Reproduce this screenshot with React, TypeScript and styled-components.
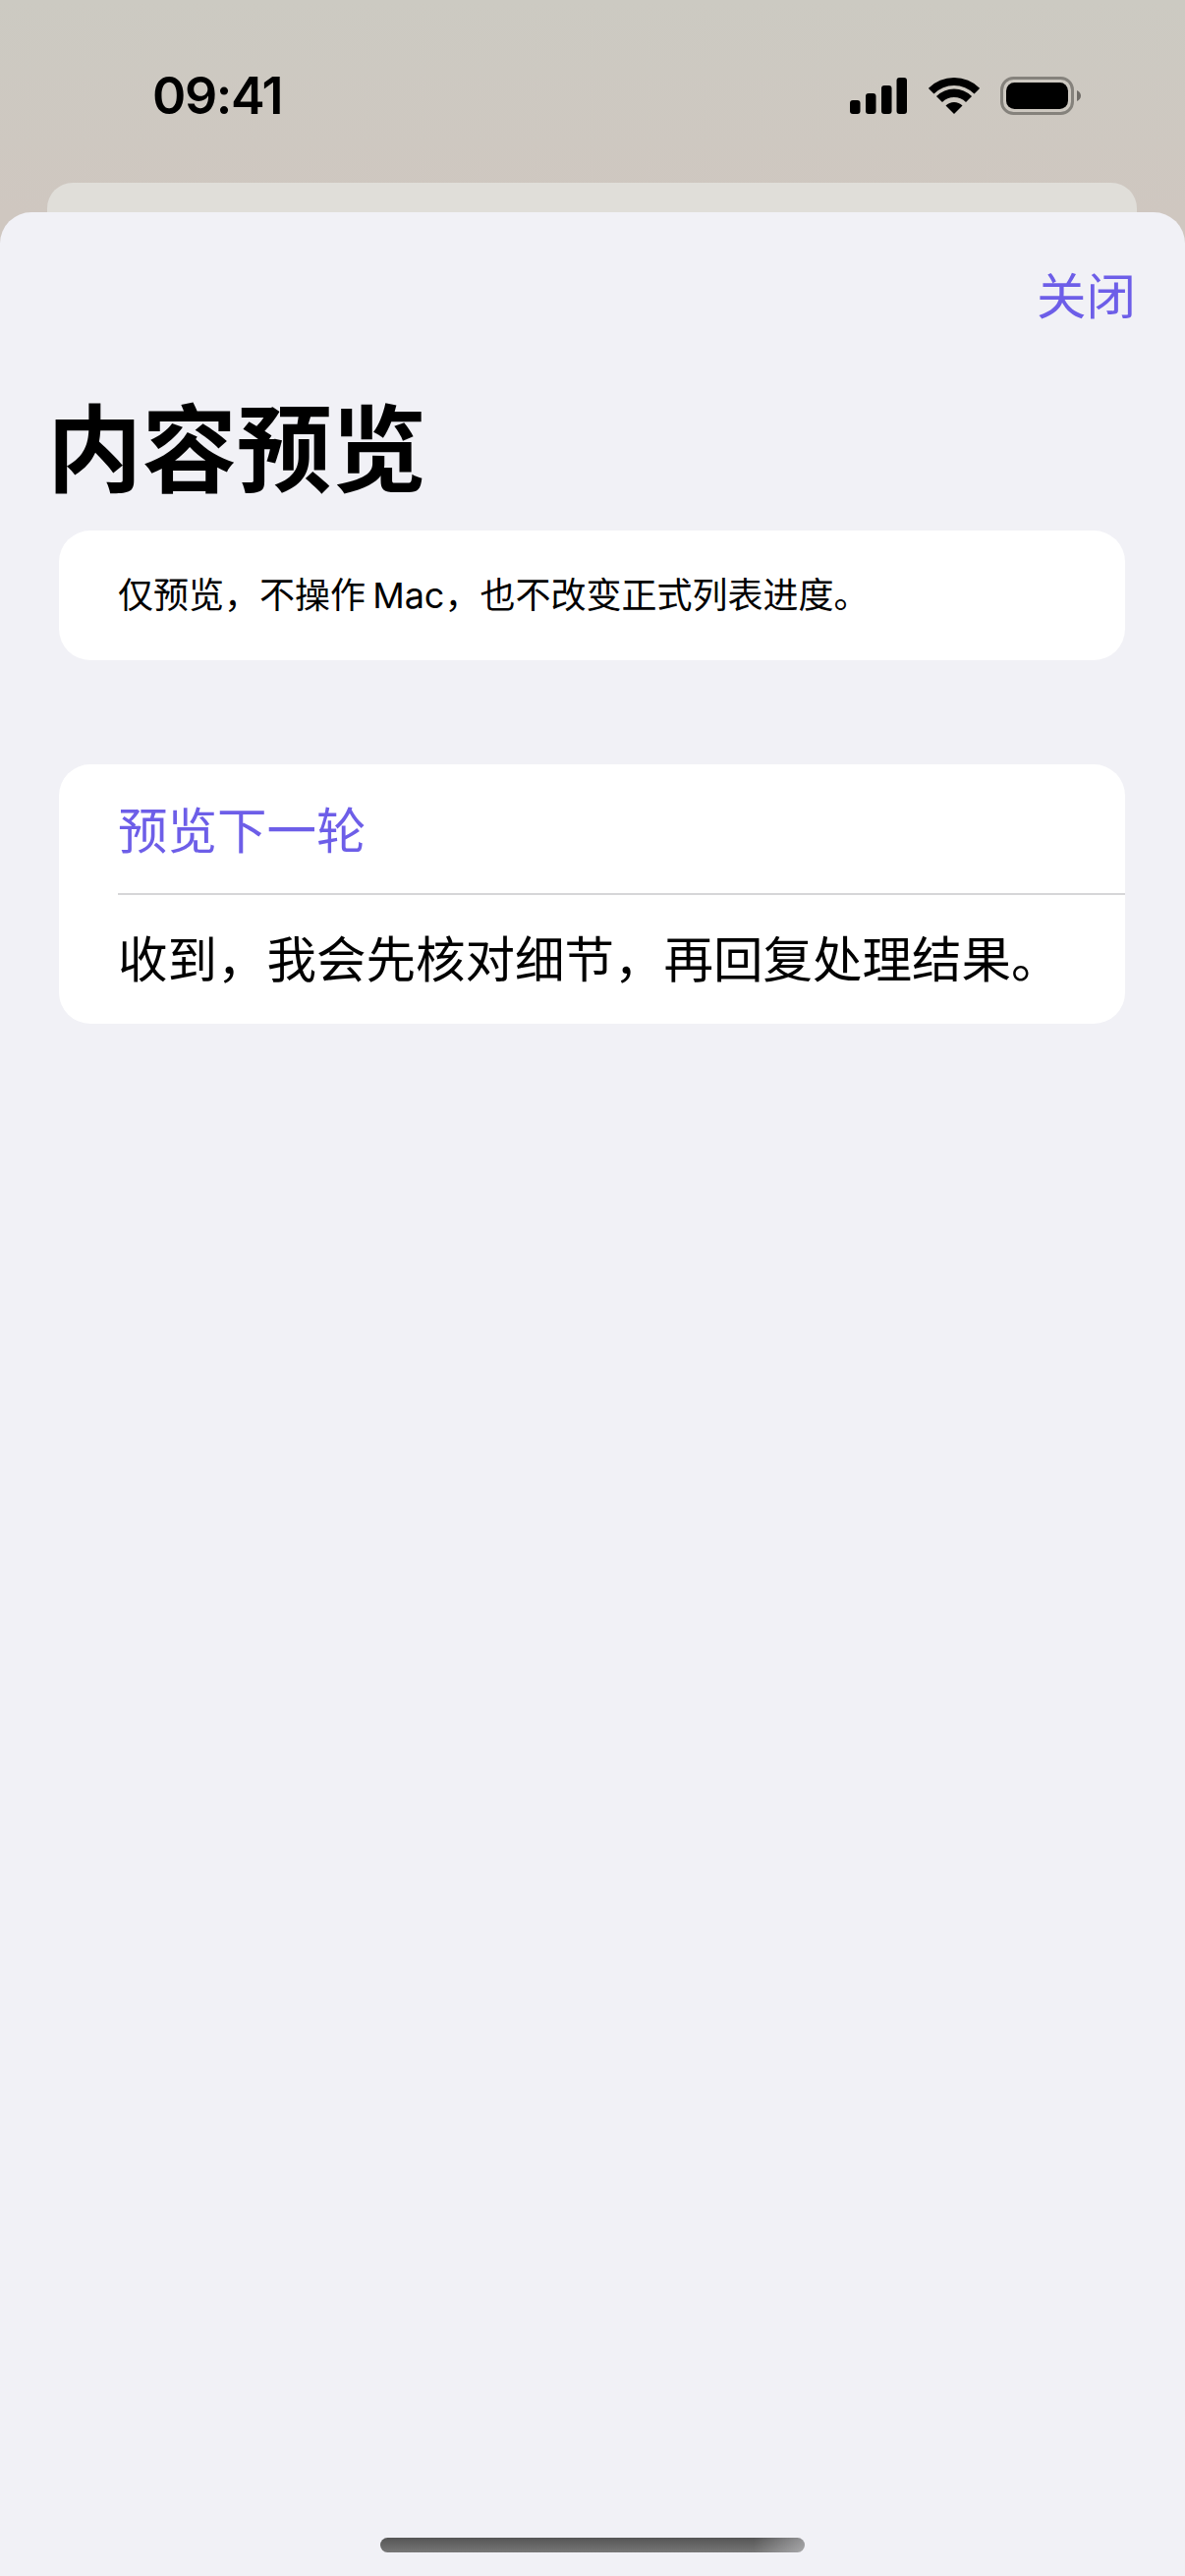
import styled, { createGlobalStyle } from 'styled-components'

const GlobalStyle = createGlobalStyle`
  html, body, #root {
    margin: 0;
    padding: 0;
    height: 100%;
  }
  body {
    background: #f1f1f6;
    font-family: Inter, "Noto Sans CJK SC", sans-serif;
  }
`

const Page = styled.div`
  width: 1206px;
  height: 2622px;
  display: flex;
  flex-direction: column;
  overflow: hidden;
  background: linear-gradient(180deg, #cccac2 0, #cfc7c0 216px);
`

const StatusBar = styled.div`
  height: 186px;
  box-sizing: border-box;
  padding: 72px 106px 0 155px;
  display: flex;
  justify-content: space-between;
  align-items: flex-start;
`

const Time = styled.span`
  font-family: Inter, sans-serif;
  font-size: 52px;
  line-height: 52px;
  font-weight: 600;
  letter-spacing: -1.4px;
  color: #000;
`

const StatusIcons = styled.div`
  display: flex;
  align-items: center;
  height: 50px;
  gap: 21px;
`

const BackCard = styled.div`
  height: 30px;
  margin: 0 49px 0 48px;
  background: #e0ded9;
  border-radius: 26px 26px 0 0;
`

const Sheet = styled.div`
  flex: 1;
  display: flex;
  flex-direction: column;
  background: #f1f1f6;
  border-radius: 32px 32px 0 0;
`

const CloseRow = styled.div`
  display: flex;
  justify-content: flex-end;
  padding: 57px 50px 3px 0;
`

const CloseButton = styled.span`
  font-family: "Noto Sans CJK SC", sans-serif;
  font-size: 50.5px;
  line-height: 50px;
  color: #6d5ee8;
`

const Title = styled.h1`
  margin: 77px 0 41px 48px;
  font-family: "Noto Sans CJK SC", sans-serif;
  font-size: 96.5px;
  line-height: 96px;
  font-weight: 700;
  color: #000;
`

const Card = styled.div`
  margin: 0 61px 0 60px;
  background: #fff;
  border-radius: 32px;
  overflow: hidden;
`

const Notice = styled.div`
  height: 132px;
  box-sizing: border-box;
  padding: 0 0 6px 60px;
  display: flex;
  align-items: center;
  font-family: Inter, "Noto Sans CJK SC", sans-serif;
  font-size: 36px;
  word-spacing: -3px;
  color: #000;
`

const Spacer = styled.div`
  height: 106px;
`

const Row = styled.div<{ $accent?: boolean }>`
  height: 131px;
  box-sizing: border-box;
  padding: 0 0 ${({ $accent }) => ($accent ? '4px' : '8px')} 60px;
  display: flex;
  align-items: center;
  font-family: "Noto Sans CJK SC", sans-serif;
  font-size: 50.5px;
  color: ${({ $accent }) => ($accent ? '#6d5ee8' : '#000')};
`

const Divider = styled.div`
  height: 2px;
  margin-left: 60px;
  background: #d6d6d8;
`

const HomeBar = styled.div`
  width: 432px;
  height: 15px;
  margin: auto auto 24px;
  border-radius: 8px;
  background:
    linear-gradient(90deg, transparent 88%, rgba(242, 242, 247, 0.4) 100%),
    linear-gradient(180deg, #555 0%, #777 100%);
`

const SignalIcon = () => (
  <svg width="59" height="37" viewBox="0 0 59 37" fill="#000">
    <rect x="0" y="23" width="10.5" height="14" rx="3" />
    <rect x="16" y="16" width="10.5" height="21" rx="3" />
    <rect x="32" y="8" width="10.5" height="29" rx="3" />
    <rect x="47.5" y="0" width="10.5" height="37" rx="3" />
  </svg>
)

const WifiIcon = () => (
  <svg width="52" height="37" viewBox="0 0 52 37" fill="#000">
    <path d="M-0.16 10.84A37 37 0 0 1 52.16 10.84L46.5 16.5A29 29 0 0 0 5.5 16.5Z" />
    <path d="M7.97 18.97A25.5 25.5 0 0 1 44.03 18.97L38.02 24.98A17 17 0 0 0 13.98 24.98Z" />
    <path d="M17.51 28.51A12 12 0 0 1 34.49 28.51L26 37Z" />
  </svg>
)

const BatteryIcon = () => (
  <svg width="82" height="39" viewBox="0 0 82 39">
    <rect x="1.5" y="1.5" width="72" height="36" rx="12" fill="none" stroke="#85827c" strokeWidth="3" />
    <rect x="6" y="6" width="63" height="27" rx="8.5" fill="#000" />
    <path d="M78 14C80.5 15 82 17 82 19.5C82 22 80.5 24 78 25Z" fill="#6f6c67" />
  </svg>
)

export default function App() {
  return (
    <Page lang="zh-CN">
      <GlobalStyle />
      <StatusBar>
        <Time>09:41</Time>
        <StatusIcons>
          <SignalIcon />
          <WifiIcon />
          <BatteryIcon />
        </StatusIcons>
      </StatusBar>
      <BackCard />
      <Sheet>
        <CloseRow>
          <CloseButton>关闭</CloseButton>
        </CloseRow>
        <Title>内容预览</Title>
        <Card>
          <Notice>仅预览，不操作 Mac，也不改变正式列表进度。</Notice>
        </Card>
        <Spacer />
        <Card>
          <Row $accent>预览下一轮</Row>
          <Divider />
          <Row>收到，我会先核对细节，再回复处理结果。</Row>
        </Card>
        <HomeBar />
      </Sheet>
    </Page>
  )
}
